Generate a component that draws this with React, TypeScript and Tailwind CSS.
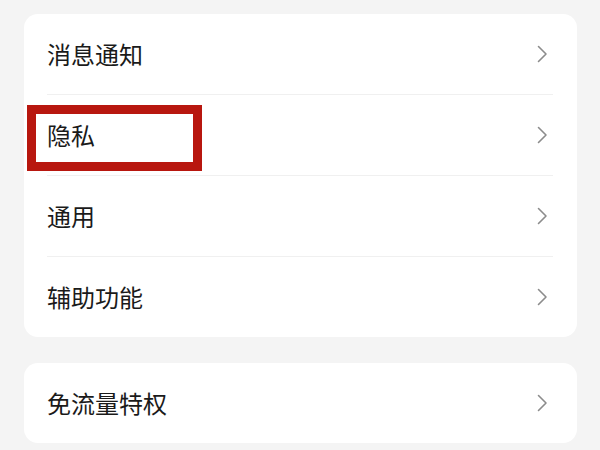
const items = ["消息通知", "隐私", "通用", "辅助功能"];

function Chevron() {
  return (
    <svg width="11" height="18" viewBox="0 0 11 18" fill="none" className="shrink-0">
      <path d="M1.5 1.5 L9 9 L1.5 16.5" stroke="#8c8c8c" strokeWidth="1.6" strokeLinecap="round" strokeLinejoin="round" />
    </svg>
  );
}

function Row({ label, highlight }: { label: string; highlight?: boolean }) {
  return (
    <div className="relative flex h-[80px] items-center justify-between pl-[23px] pr-[29px]">
      <span className="text-[24px] leading-none text-[#1a1a1a]">{label}</span>
      <Chevron />
      {highlight && (
        <div className="absolute left-[3px] top-[10px] h-[66px] w-[175px] border-[9px] border-[#b8170f]" />
      )}
    </div>
  );
}

export default function App() {
  return (
    <div
      className="min-h-[450px] w-[600px] bg-[#f4f4f4] pl-[24px] pr-[23px] pt-[14px]"
      style={{ fontFamily: '"Noto Sans CJK SC", "Noto Sans", sans-serif' }}
    >
      <div className="overflow-hidden rounded-[14px] bg-white">
        {items.map((label, i) => (
          <div key={label}>
            {i > 0 && <div className="ml-[23px] mr-[24px] h-px bg-[#f0f0f0]" />}
            <Row label={label} highlight={label === "隐私"} />
          </div>
        ))}
      </div>
      <div className="mt-[26px] overflow-hidden rounded-[14px] bg-white">
        <Row label="免流量特权" />
      </div>
    </div>
  );
}
